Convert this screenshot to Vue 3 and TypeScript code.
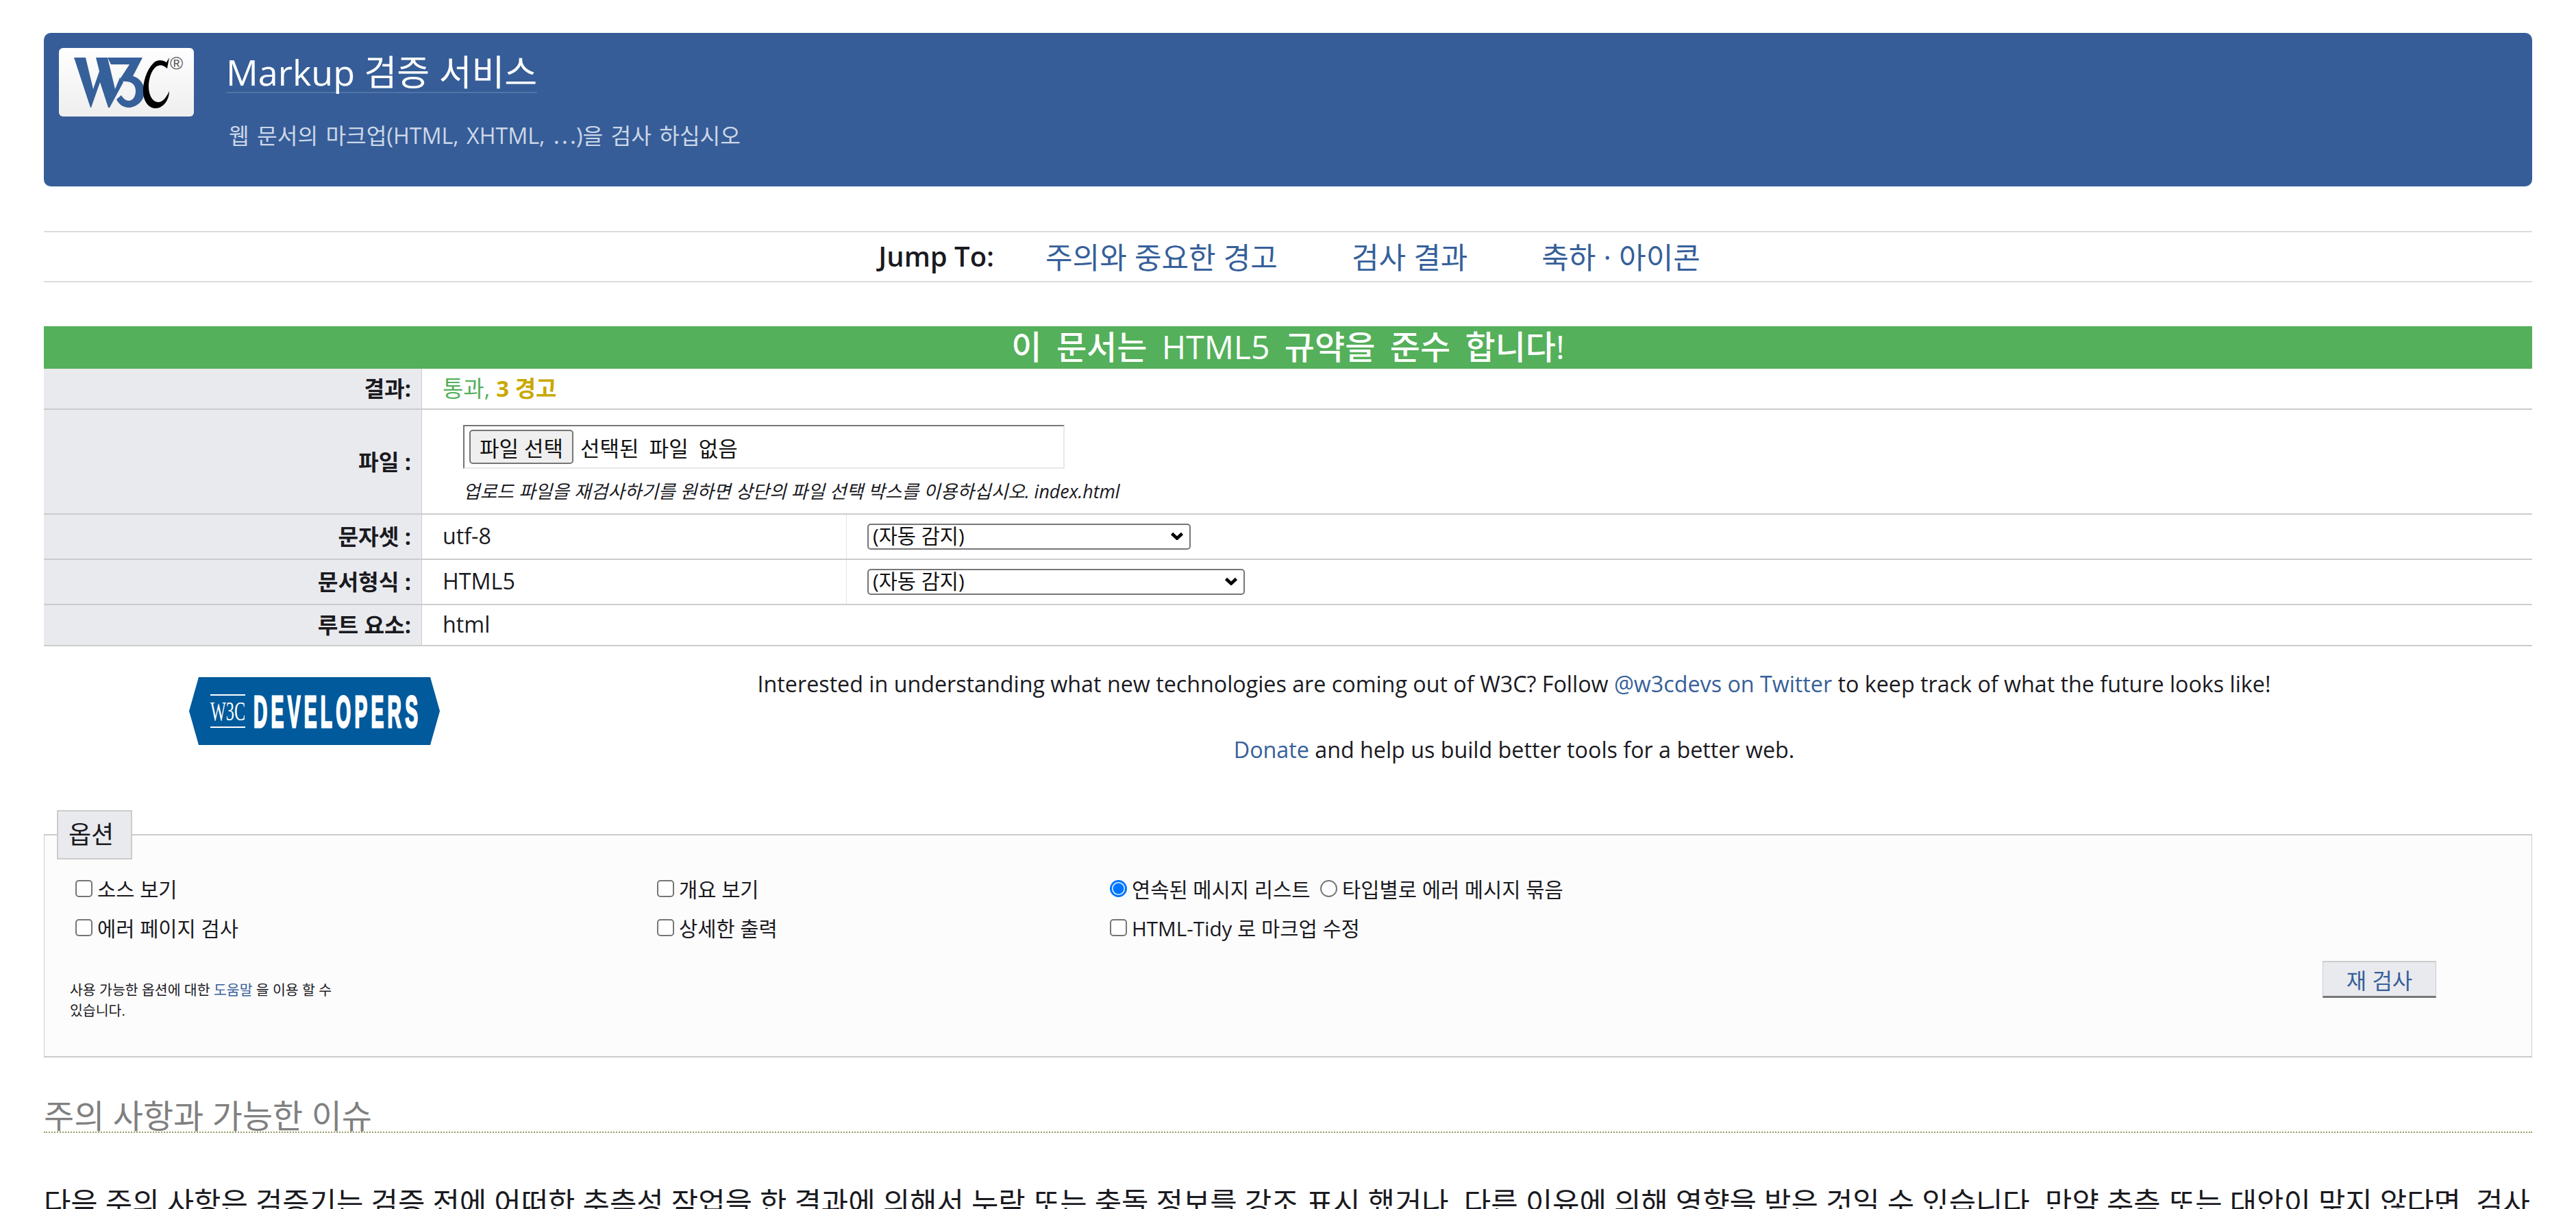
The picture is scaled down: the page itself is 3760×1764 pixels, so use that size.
<script setup lang="ts">
interface SelectRow {
  label: string
  value: string
  cls: string
}
const selectRows: SelectRow[] = [
  { label: '문자셋 :', value: 'utf-8', cls: 's1' },
  { label: '문서형식 :', value: 'HTML5', cls: 's2' },
]
</script>

<template>
  <div class="page">
    <header class="banner">
      <svg class="logo" viewBox="0 0 197 100">
        <defs>
          <linearGradient id="lg" x1="0" y1="0" x2="0" y2="1">
            <stop offset="0" stop-color="#ffffff" />
            <stop offset="1" stop-color="#eeeeee" />
          </linearGradient>
        </defs>
        <rect width="197" height="100" rx="6" fill="url(#lg)" />
        <path fill="#36609a" d="M22 14H39L50 60 59 34 54 14H71L82 60 89 43 94 50 74 87H72L60 50 47 87H46Z" />
        <path fill="#36609a" d="M71 14H122L108 41C120 44 125 56 125 63 125 78 112 87 102 87 94 87 87 82 84 75L91 69C94 74 98 77 102 77 108 77 112 70 112 63 112 52 104 48 92 49L90 44 103 24H76Z" />
        <path fill="#000" d="M161 14 158 30C152 24 146 24 141 28 135 33 131 45 131 56 131 68 136 78 144 79 151 80 157 72 161 63 161 75 153 88 141 88 131 88 124 78 123 66 122 50 128 32 138 22 144 16 152 18 157 21Z" />
        <text x="162" y="31" class="logo-r">®</text>
      </svg>
      <div class="banner-text">
        <h1 class="title">Markup 검증 서비스</h1>
        <p class="tagline">웹 문서의 마크업(HTML, XHTML, <span class="ell">⋯</span>)을 검사 하십시오</p>
      </div>
    </header>

    <nav class="jump">
      <strong class="jump-label">Jump To:</strong>
      <a class="jump-link">주의와 중요한 경고</a>
      <a class="jump-link">검사 결과</a>
      <a class="jump-link">축하 · 아이콘</a>
    </nav>

    <h2 class="valid">이 문서는 HTML5 규약을 준수 합니다!</h2>

    <div class="table">
      <div class="row r1">
        <div class="th">결과:</div>
        <div class="td"><span class="pass">통과,</span><strong class="warn">3 경고</strong></div>
      </div>
      <div class="row r2">
        <div class="th">파일 :</div>
        <div class="td file-cell">
          <div class="file-box">
            <span class="file-btn">파일 선택</span>
            <span class="file-none">선택된 파일 없음</span>
          </div>
          <div class="file-note">업로드 파일을 재검사하기를 원하면 상단의 파일 선택 박스를 이용하십시오. index.html</div>
        </div>
      </div>
      <div v-for="r in selectRows" :key="r.label" class="row r3">
        <div class="th">{{ r.label }}</div>
        <div class="td short">{{ r.value }}</div>
        <div class="td sel">
          <div class="select" :class="r.cls">
            (자동 감지)
            <svg class="arrow" viewBox="0 0 20 12"><path d="M2.5 2.5l7.5 7 7.5-7" /></svg>
          </div>
        </div>
      </div>
      <div class="row r5">
        <div class="th">루트 요소:</div>
        <div class="td">html</div>
      </div>
    </div>

    <section class="donate">
      <svg class="dev-logo" viewBox="0 0 366 99">
        <path fill="#005a9c" d="M14 0H352L366 49.5 352 99H14L0 49.5Z" />
        <rect x="31" y="25" width="51" height="2" fill="#fff" />
        <rect x="31" y="72" width="51" height="2" fill="#fff" />
        <text x="31" y="63" class="dev-w3c" textLength="51" lengthAdjust="spacingAndGlyphs">W3C</text>
        <text transform="translate(94 73) scale(.44 1)" class="dev-word">DEVELOPERS</text>
      </svg>
      <div class="donate-text">
        <p class="donate-p">Interested in understanding what new technologies are coming out of W3C? Follow <a>@w3cdevs on Twitter</a> to keep track of what the future looks like!</p>
        <p class="donate-p"><a>Donate</a> and help us build better tools for a better web.</p>
      </div>
    </section>

    <fieldset class="options">
      <legend class="legend">옵션</legend>
      <div class="opt-grid">
        <label class="opt"><span class="check"></span>소스 보기</label>
        <label class="opt"><span class="check"></span>개요 보기</label>
        <div class="opt">
          <span class="radio on"></span>연속된 메시지 리스트
          <span class="radio second"></span>타입별로 에러 메시지 묶음
        </div>
        <label class="opt"><span class="check"></span>에러 페이지 검사</label>
        <label class="opt"><span class="check"></span>상세한 출력</label>
        <label class="opt"><span class="check"></span>HTML-Tidy 로 마크업 수정</label>
      </div>
      <div class="opt-foot">
        <p class="help">사용 가능한 옵션에 대한 <a>도움말</a> 을 이용 할 수 있습니다.</p>
        <span class="revalidate">재 검사</span>
      </div>
    </fieldset>

    <h2 class="section-title">주의 사항과 가능한 이슈</h2>
    <p class="body-text">다음 주의 사항은 검증기는 검증 전에 어떠한 추측성 작업을 한 결과에 의해서 누락 또는 충돌 정보를 강조 표시 했거나, 다른 이유에 의해 영향을 받은 것일 수 있습니다. 만약 추측 또는 대안이 맞지 않다면, 검사 결과는 올바르지 않을 수 있습니다.</p>
  </div>
</template>

<style>
html, body { margin: 0; background: #fff; }
</style>

<style scoped>
.page {
  width: 3760px;
  height: 1764px;
  overflow: hidden;
  box-sizing: border-box;
  padding: 48px 64px 0;
  font-family: "Open Sans", "Noto Sans CJK KR", sans-serif;
  font-size: 32.25px;
  color: #1a1a1f;
  background: #fff;
}
a { color: #36609a; }
.banner {
  height: 224px;
  background: #365d97;
  border-radius: 10px;
  display: flex;
  padding: 22px 0 0 22px;
  box-sizing: border-box;
}
.logo { display: block; flex: none; width: 197px; height: 100px; }
.logo-r { font-family: "Liberation Sans", sans-serif; font-size: 26px; fill: #555; }
.banner-text { margin-left: 47px; }
.title {
  display: inline-block;
  margin: 6px 0 0;
  font-size: 52px;
  line-height: 58px;
  font-weight: 400;
  color: #fff;
  border-bottom: 2px solid #4f74a8;
}
.tagline {
  margin: 38px 0 0 4px;
  line-height: 44px;
  color: #ccd6e8;
  word-spacing: 3px;
}
.ell { font-family: "Noto Sans CJK KR", sans-serif; }
.jump {
  margin-top: 65px;
  height: 75px;
  box-sizing: border-box;
  border-top: 2px solid #dcdce0;
  border-bottom: 2px solid #dcdce0;
  display: flex;
  justify-content: center;
  align-items: center;
  gap: 108px;
  font-size: 43px;
  padding: 0 0 3px 4px;
}
.jump-label { font-size: 40px; font-weight: 600; margin-right: -33px; }
.jump-link { color: #36609a; }
.valid {
  margin: 64px 0 0;
  height: 62px;
  line-height: 60px;
  background: #54b05a;
  color: #fff;
  text-align: center;
  font-size: 48px;
  font-weight: 500;
  word-spacing: 9px;
}
.table { border-bottom: 2px solid #ccc; }
.row { display: flex; border-bottom: 2px solid #ccc; box-sizing: border-box; }
.row:last-child { border-bottom: 0; }
.r1 { height: 60px; }
.r2 { height: 153px; }
.r3 { height: 66px; }
.r5 { height: 58px; }
.th {
  width: 552px;
  flex: none;
  box-sizing: border-box;
  background: #e9eaee;
  border-right: 1px solid #ccc;
  padding: 0 15px 4px 0;
  font-weight: 700;
  display: flex;
  align-items: center;
  justify-content: flex-end;
}
.td {
  display: flex;
  align-items: center;
  padding: 0 0 4px 30px;
}
.r1 .td { font-size: 33px; }
.pass { color: #54b05a; }
.warn { color: #c9a800; margin-left: 9px; }
.short { width: 620px; box-sizing: border-box; flex: none; border-right: 1px solid #e4e4e4; }
.sel { flex: 1; padding-bottom: 0; }
.file-cell { flex-direction: column; align-items: flex-start; padding-left: 60px; }
.file-box {
  margin-top: 22px;
  width: 878px;
  height: 64px;
  box-sizing: border-box;
  border: 2px solid;
  border-color: #767676 #e8e8e8 #e8e8e8 #767676;
  background: #fff;
  display: flex;
  align-items: center;
  padding-left: 7px;
  font-size: 31px;
  color: #111;
}
.file-btn {
  width: 152px;
  height: 50px;
  box-sizing: border-box;
  border: 2px solid #767676;
  border-radius: 5px;
  background: #efefef;
  display: flex;
  align-items: center;
  justify-content: center;
}
.file-none { margin-left: 10px; word-spacing: 7px; }
.file-note { margin-top: 16px; font-size: 26.8px; font-style: italic; line-height: 34px; }
.select {
  position: relative;
  height: 38px;
  box-sizing: border-box;
  border: 2px solid #767676;
  border-radius: 5px;
  background: #fff;
  padding-left: 6px;
  font-size: 29.5px;
  line-height: 31px;
  color: #111;
}
.s1 { width: 472px; }
.s2 { width: 551px; }
.arrow {
  position: absolute;
  right: 8px;
  top: 10px;
  width: 20px;
  height: 12px;
  fill: none;
  stroke: #000;
  stroke-width: 4.6;
}
.donate { display: flex; height: 239px; box-sizing: border-box; }
.dev-logo { display: block; width: 366px; height: 99px; margin: 45px 0 0 212px; flex: none; }
.dev-w3c { font-family: "Liberation Serif", serif; font-size: 41px; fill: #fff; }
.dev-word {
  font-family: "Liberation Sans", sans-serif;
  font-size: 64px;
  font-weight: 700;
  letter-spacing: 12px;
  fill: #fff;
  stroke: #fff;
  stroke-width: 3px;
}
.donate-text { flex: 1; text-align: center; margin-left: 82px; }
.donate-p { margin: 0; height: 96px; line-height: 44px; padding-top: 33px; box-sizing: border-box; }
.options {
  margin: 0;
  padding: 0;
  height: 361px;
  box-sizing: border-box;
  border-style: solid;
  border-color: #ccc;
  border-width: 2px 1px 2px 1px;
  background: #fcfcfc;
  min-width: 0;
}
.legend {
  margin: 0 auto 0 18px;
  padding: 0 10px 0 0;
  width: 110px;
  height: 72px;
  box-sizing: border-box;
  border: 2px solid #ccc;
  background: #e9eaee;
  font-size: 36px;
  text-align: center;
  line-height: 68px;
}
.opt-grid {
  display: grid;
  grid-template-columns: 849px 661px 1fr;
  grid-auto-rows: 57px;
  padding: 14px 0 0 45px;
  font-size: 29.6px;
}
.opt { display: flex; align-items: center; white-space: pre-wrap; }
.check {
  width: 25px;
  height: 25px;
  box-sizing: border-box;
  border: 2px solid #767676;
  border-radius: 5px;
  background: #fff;
  margin-right: 7px;
}
.radio {
  width: 25px;
  height: 25px;
  box-sizing: border-box;
  border: 2px solid #767676;
  border-radius: 50%;
  background: #fff;
  margin-right: 7px;
}
.radio.on { border: 3px solid #0075ff; background: radial-gradient(circle, #0075ff 0 7.5px, #fff 8.5px); }
.radio.second { margin-left: 7px; }
.opt-foot {
  display: flex;
  justify-content: space-between;
  padding: 0 139px 0 37px;
  margin-top: 20px;
}
.help { margin: 27px 0 0; width: 400px; font-size: 20.5px; line-height: 30px; }
.revalidate {
  width: 166px;
  height: 54px;
  box-sizing: border-box;
  border-style: solid;
  border-width: 2px 1px 3px;
  border-color: #ccc #ccc #767676;
  background: #e9eaee;
  color: #36609a;
  font-size: 32px;
  display: flex;
  align-items: center;
  justify-content: center;
}
.section-title {
  margin: 62px 0 0;
  height: 46px;
  line-height: 46px;
  font-size: 48px;
  font-weight: 400;
  color: #808080;
  border-bottom: 2px dotted #9a9a60;
  box-sizing: content-box;
}
.body-text {
  margin: 72px 0 0;
  font-size: 42.8px;
  line-height: 60px;
}
</style>
